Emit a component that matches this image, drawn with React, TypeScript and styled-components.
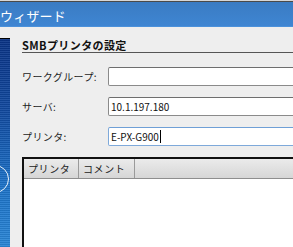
import React from "react";
import styled, { createGlobalStyle } from "styled-components";

const GlobalStyle = createGlobalStyle`
  html, body {
    margin: 0;
    padding: 0;
    background: #eeeeee;
    overflow: hidden;
  }
  body {
    font-family: "Noto Sans CJK JP", "Liberation Sans", sans-serif;
  }
`;

const fields = [
  { label: "ワークグループ:", value: "" },
  { label: "サーバ:", value: "10.1.197.180" },
  { label: "プリンタ:", value: "E-PX-G900", focused: true },
];

const columns = [
  { title: "プリンタ", width: 55 },
  { title: "コメント", width: 56 },
  { title: "", width: 200 },
];

export default function App() {
  return (
    <>
      <GlobalStyle />
      <Styled.Window>
        <Styled.TitleBar>
          <Styled.Title>ウィザード</Styled.Title>
        </Styled.TitleBar>
        <Styled.Main>
          <Styled.SidePanel />
          <Styled.Content>
            <Styled.Heading>SMBプリンタの設定</Styled.Heading>
            <Styled.Form>
              {fields.map((f) => (
                <Styled.Row key={f.label}>
                  <Styled.Label>{f.label}</Styled.Label>
                  <Styled.Input $focused={!!f.focused}>
                    {f.value}
                    {f.focused && <Styled.Caret />}
                  </Styled.Input>
                </Styled.Row>
              ))}
            </Styled.Form>
            <Styled.Table>
              <Styled.HeaderRow>
                {columns.map((c, i) => (
                  <Styled.HeaderCell key={i} $width={c.width}>
                    {c.title}
                  </Styled.HeaderCell>
                ))}
              </Styled.HeaderRow>
            </Styled.Table>
          </Styled.Content>
        </Styled.Main>
      </Styled.Window>
    </>
  );
}

const Styled = {
  Window: styled.div`
    width: 293px;
    height: 247px;
    overflow: hidden;
    background: #eeeeee;
    display: flex;
    flex-direction: column;
  `,
  TitleBar: styled.div`
    height: 26px;
    border-top: 1px solid #d6d6d6;
    box-shadow: inset 0 1px 0 #4a4a4a, inset 0 -1px 0 #4b91db;
    background: linear-gradient(#3a7bc2, #3f86d3);
    display: flex;
    align-items: center;
    flex-shrink: 0;
  `,
  Title: styled.span`
    color: #ffffff;
    font-size: 13px;
    letter-spacing: 0.2px;
    line-height: 1;
    margin-top: 3px;
  `,
  Main: styled.div`
    display: flex;
    flex: 1;
    margin-top: 11px;
    min-height: 0;
  `,
  SidePanel: styled.div`
    position: relative;
    width: 10px;
    flex-shrink: 0;
    border-top: 1px solid #000;
    overflow: hidden;
    background:
      repeating-linear-gradient(
        rgba(255, 255, 255, 0.08) 0 1px,
        rgba(0, 0, 0, 0.08) 1px 2px
      ),
      linear-gradient(#0a3386 0%, #114aa0 35%, #1c72c8 70%, #2a86d6 100%);

    &::after {
      content: "";
      position: absolute;
      left: -19px;
      top: 126px;
      width: 26px;
      height: 26px;
      border: 1.5px solid rgba(255, 255, 255, 0.9);
      border-radius: 50%;
    }
  `,
  Content: styled.div`
    flex: 1;
    min-width: 0;
    padding-left: 12px;
  `,
  Heading: styled.div`
    font-size: 11px;
    font-weight: bold;
    color: #111;
    line-height: 13px;
    letter-spacing: 0.4px;
    padding-top: 1px;
    border-bottom: 1px solid #555;
  `,
  Form: styled.div`
    display: flex;
    flex-direction: column;
    gap: 11px;
    margin-top: 14px;
  `,
  Row: styled.div`
    display: flex;
    align-items: center;
  `,
  Label: styled.div`
    width: 86px;
    flex-shrink: 0;
    font-size: 10px;
    color: #222;
    letter-spacing: 0.4px;
  `,
  Input: styled.div<{ $focused: boolean }>`
    width: 220px;
    flex-shrink: 0;
    height: 19px;
    box-sizing: border-box;
    background: #fff;
    border: 1px solid ${(p) => (p.$focused ? "#7ea9da" : "#8a8a8a")};
    border-top-color: ${(p) => (p.$focused ? "#6f9fd6" : "#6e6e6e")};
    border-radius: 2px;
    padding-left: 2px;
    font-size: 10px;
    line-height: 17px;
    color: #111;
    display: flex;
    align-items: center;
  `,
  Caret: styled.span`
    display: inline-block;
    width: 1px;
    height: 13px;
    background: #000;
    margin-left: 1px;
  `,
  Table: styled.div`
    margin-top: 11px;
    width: 300px;
    height: 100px;
    border-top: 2px solid #111;
    border-left: 2px solid #111;
    background: #fff;
  `,
  HeaderRow: styled.div`
    display: flex;
    height: 19px;
    border-bottom: 1px solid #8e8e8e;
    background: linear-gradient(#ebebeb, #d6d6d6);
  `,
  HeaderCell: styled.div<{ $width: number }>`
    width: ${(p) => p.$width}px;
    flex-shrink: 0;
    border-right: 1px solid #9a9a9a;
    font-size: 10px;
    color: #222;
    padding-left: 4px;
    box-sizing: border-box;
    line-height: 19px;
    letter-spacing: 0.6px;
  `,
};
